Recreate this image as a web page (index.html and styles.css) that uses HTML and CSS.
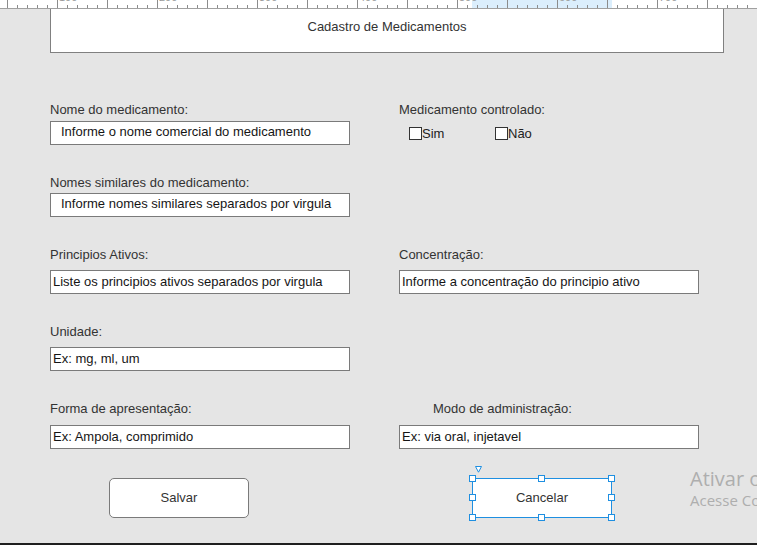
FILE: index.html
```html
<!DOCTYPE html>
<html lang="pt-BR">
<head>
<meta charset="utf-8">
<title>Cadastro de Medicamentos</title>
<link rel="stylesheet" href="styles.css">
</head>
<body>
<div class="screen">
  <div class="ruler">
    <div class="ruler-scale">
      <span class="ruler-cell">0</span>
      <span class="ruler-cell">100</span>
      <span class="ruler-cell">200</span>
      <span class="ruler-cell">300</span>
      <span class="ruler-cell">400</span>
      <span class="ruler-cell">500</span>
      <span class="ruler-cell">600</span>
      <span class="ruler-cell">700</span>
      <span class="ruler-cell">800</span>
    </div>
  </div>

  <div class="canvas">
    <div class="form-title">Cadastro de Medicamentos</div>

    <div class="form-grid">
      <div class="group group--r1">
        <span class="label">Nome do medicamento:</span>
        <div class="field field--indent">Informe o nome comercial do medicamento</div>
      </div>
      <div class="group">
        <span class="label">Medicamento controlado:</span>
        <div class="checks">
          <label class="check"><span class="box"></span>Sim</label>
          <label class="check"><span class="box"></span>Não</label>
        </div>
      </div>

      <div class="group group--r2">
        <span class="label">Nomes similares do medicamento:</span>
        <div class="field field--indent">Informe nomes similares separados por virgula</div>
      </div>
      <div class="group"></div>

      <div class="group">
        <span class="label">Principios Ativos:</span>
        <div class="field">Liste os principios ativos separados por virgula</div>
      </div>
      <div class="group">
        <span class="label">Concentração:</span>
        <div class="field">Informe a concentração do principio ativo</div>
      </div>

      <div class="group">
        <span class="label">Unidade:</span>
        <div class="field">Ex: mg, ml, um</div>
      </div>
      <div class="group"></div>

      <div class="group group--r5">
        <span class="label">Forma de apresentação:</span>
        <div class="field">Ex: Ampola, comprimido</div>
      </div>
      <div class="group group--r5">
        <span class="label label--shift">Modo de administração:</span>
        <div class="field">Ex: via oral, injetavel</div>
      </div>

      <div class="actions">
        <button class="btn btn--save" type="button">Salvar</button>
      </div>
      <div class="actions">
        <button class="btn btn--cancel" type="button">Cancelar
          <svg class="smart-tag" width="7" height="7" viewBox="0 0 7 7"><path d="M0.5 0.5 H6.5 L3.5 6.2 Z" fill="#fff" stroke="#1e8fe1" stroke-width="1"/></svg>
          <span class="handle h-tl"></span>
          <span class="handle h-tc"></span>
          <span class="handle h-tr"></span>
          <span class="handle h-ml"></span>
          <span class="handle h-mr"></span>
          <span class="handle h-bl"></span>
          <span class="handle h-bc"></span>
          <span class="handle h-br"></span>
        </button>
      </div>
    </div>
  </div>

  <div class="bottom-bar"></div>

  <div class="watermark">
    <div class="wm-title">Ativar o Windows</div>
    <div class="wm-sub">Acesse Configurações para ativar o Windows.</div>
  </div>
</div>
</body>
</html>
```

FILE: styles.css
```css
* {
  box-sizing: border-box;
}

html,
body {
  margin: 0;
  padding: 0;
}

body {
  background: #e5e5e5;
  font-family: "Liberation Sans", Arial, sans-serif;
  font-size: 13px;
  color: #333;
}

.screen {
  position: relative;
  width: 757px;
  height: 545px;
  overflow: hidden;
  display: flex;
  flex-direction: column;
}

/* ---------- ruler ---------- */
.ruler {
  flex: none;
  height: 9px;
  overflow: hidden;
  background:
    linear-gradient(#a0a0a0, #a0a0a0) 0 8px / 100% 1px no-repeat,
    repeating-linear-gradient(to right, #8c8c8c 0 1px, transparent 1px 50px) 7px 0 / 100% 8px no-repeat,
    repeating-linear-gradient(to right, #8c8c8c 0 1px, transparent 1px 10px) 7px 5px / 100% 3px no-repeat,
    linear-gradient(#dbeefc, #dbeefc) 472px 0 / 140px 8px no-repeat,
    #fff;
}

.ruler-scale {
  display: flex;
  margin: -8px 0 0 -43px;
}

.ruler-cell {
  flex: none;
  width: 100px;
  padding-left: 2px;
  font-size: 11px;
  line-height: 11px;
  color: #9a9a9a;
}

/* ---------- canvas ---------- */
.canvas {
  flex: 1;
}

.form-title {
  margin-left: 50px;
  width: 674px;
  height: 44px;
  background: #fff;
  border: 1px solid #808080;
  border-top: 0;
  padding-top: 10px;
  text-align: center;
  line-height: 15px;
  color: #333;
}

.form-grid {
  display: grid;
  grid-template-columns: 300px 300px;
  column-gap: 49px;
  row-gap: 30px;
  margin: 49px 0 0 50px;
}

.group {
  display: flex;
  flex-direction: column;
}

.label {
  display: block;
  line-height: 15px;
  color: #333;
  white-space: nowrap;
}

.label--shift {
  padding-left: 34px;
}

.field {
  height: 24px;
  margin-top: 8px;
  background: #fff;
  border: 1px solid #7a7a7a;
  padding: 3px 2px 0;
  line-height: 15px;
  color: #151515;
  white-space: nowrap;
  overflow: hidden;
}

.field--indent {
  padding: 2px 10px 0;
}

.group--r1 .field {
  margin-top: 4px;
}

.group--r2 .field {
  margin-top: 3px;
}

.group--r5 .field {
  margin-top: 9px;
}

/* ---------- checkboxes ---------- */
.checks {
  display: flex;
  margin-top: 9px;
  padding-left: 10px;
  height: 15px;
}

.check {
  display: flex;
  align-items: center;
  width: 86px;
  line-height: 15px;
  color: #222;
}

.box {
  width: 13px;
  height: 13px;
  background: #fff;
  border: 1px solid #333;
  flex: none;
}

/* ---------- buttons ---------- */
.actions {
  display: flex;
  margin-top: -1px;
}

.btn {
  display: flex;
  align-items: center;
  justify-content: center;
  width: 140px;
  height: 40px;
  padding: 0 0 2px;
  background: #fff;
  border: 1px solid #7a7a7a;
  border-radius: 5px;
  font-family: "Liberation Sans", Arial, sans-serif;
  font-size: 13px;
  color: #333;
}

.btn--save {
  margin-left: 59px;
}

.btn--cancel {
  position: relative;
  margin-left: 73px;
  border-color: #1e8fe1;
  border-radius: 0;
}

.smart-tag {
  position: absolute;
  left: 2px;
  top: -13px;
}

.handle {
  position: absolute;
  width: 7px;
  height: 7px;
  background: #fff;
  border: 1px solid #1e8fe1;
}

.h-tl { left: -4px; top: -4px; }
.h-tc { left: 50%; margin-left: -4px; top: -4px; }
.h-tr { right: -4px; top: -4px; }
.h-ml { left: -4px; top: 50%; margin-top: -4px; }
.h-mr { right: -4px; top: 50%; margin-top: -4px; }
.h-bl { left: -4px; bottom: -4px; }
.h-bc { left: 50%; margin-left: -4px; bottom: -4px; }
.h-br { right: -4px; bottom: -4px; }

/* ---------- bottom + watermark ---------- */
.bottom-bar {
  flex: none;
  height: 2px;
  background: #1f1f1f;
}

.watermark {
  position: absolute;
  left: 690px;
  top: 465px;
  white-space: nowrap;
  font-family: "Open Sans", "Noto Sans", sans-serif;
  color: #aeaeae;
}

.wm-title {
  font-size: 20px;
  line-height: 27px;
}

.wm-sub {
  font-size: 15px;
  line-height: 16px;
}
```
